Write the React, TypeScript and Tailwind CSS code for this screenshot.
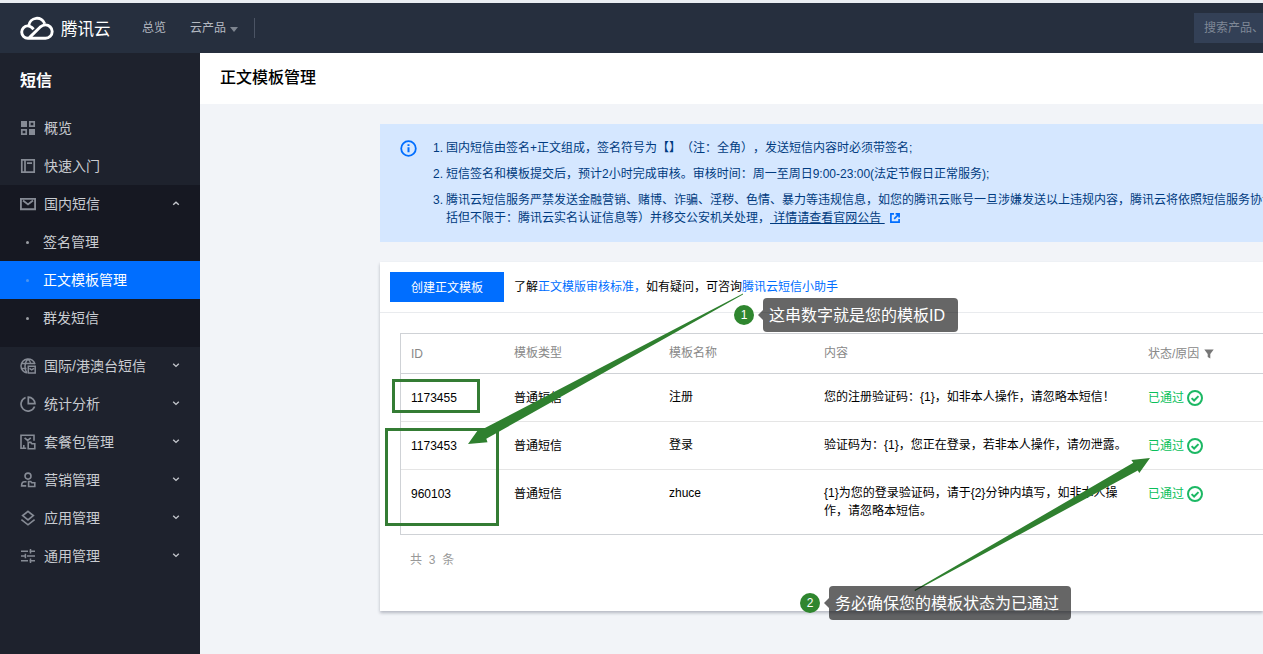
import React from 'react';

interface IconProps {
  name: string;
}

interface MenuItem {
  label: string;
  icon: string;
  arrow?: boolean;
}

interface Template {
  id: string;
  type: string;
  name: string;
  content: string[];
}

const topMenu: MenuItem[] = [
  { label: '概览', icon: 'overview' },
  { label: '快速入门', icon: 'guide' },
];

const subMenu = ['签名管理', '正文模板管理', '群发短信'];

const bottomMenu: MenuItem[] = [
  { label: '国际/港澳台短信', icon: 'global', arrow: true },
  { label: '统计分析', icon: 'stats', arrow: true },
  { label: '套餐包管理', icon: 'package', arrow: true },
  { label: '营销管理', icon: 'marketing', arrow: true },
  { label: '应用管理', icon: 'apps', arrow: true },
  { label: '通用管理', icon: 'settings', arrow: true },
];

const templates: Template[] = [
  { id: '1173455', type: '普通短信', name: '注册', content: ['您的注册验证码：{1}，如非本人操作，请忽略本短信！'] },
  { id: '1173453', type: '普通短信', name: '登录', content: ['验证码为：{1}，您正在登录，若非本人操作，请勿泄露。'] },
  { id: '960103', type: '普通短信', name: 'zhuce', content: ['{1}为您的登录验证码，请于{2}分钟内填写，如非本人操', '作，请忽略本短信。'] },
];

const MenuIcon: React.FC<IconProps> = ({ name }) => (
  <svg className="w-4 h-4 shrink-0 text-[#868b95]" viewBox="0 0 16 16" fill="none" stroke="currentColor" strokeWidth={1.7}>
    {name === 'overview' && (
      <>
        <path d="M1 1h6v6H1zM9 9h6v6H9z" fill="currentColor" stroke="none" />
        <path d="M9.8 1.8h4.4v4.4H9.8zM1.8 9.8h4.4v4.4H1.8z" />
      </>
    )}
    {name === 'guide' && (
      <path d="M1.8 1.8h12.4v12.4H1.8zM5 2v12M7 5.2h5" />
    )}
    {name === 'mail' && (
      <path d="M.9 2.9h14.2v10.4H.9zM3 4.6l5 3.8 5-3.8" strokeWidth={1.9} />
    )}
    {name === 'global' && (
      <>
        <path d="M15 6.3A7.1 7.1 0 1 0 7 15M1 5.5h13.5M1 10.4h5.5M8 1C4.2 4.5 4.2 11 7 15M8 1c1.7 1.5 2.6 3.2 2.7 5.2" strokeWidth={1.5} />
        <path d="M8.3 8.3h6.9v6.6H8.3zM9.5 10.3l2.2 1.6 2.3-1.6" strokeWidth={1.5} />
      </>
    )}
    {name === 'stats' && (
      <path d="M5.6 1.5a7 7 0 1 0 9 9M8.3 1.1v6.6H15A6.8 6.8 0 0 0 8.3 1.1z" />
    )}
    {name === 'package' && (
      <path d="M6.2 14.2H1V1.2h13v5.5M4.6 3.8l3 2.6 3.2-2.6M3.8 14V11M8.2 8.4h2.6l1 1.3h3v5H8.2z" strokeWidth={1.6} />
    )}
    {name === 'marketing' && (
      <path d="M8 1.1a3 3 0 1 1 0 6 3 3 0 0 1 0-6zM6.5 9.7H4.4c-2 0-2.8 1.3-2.8 4.2h4.6M8.6 9.5h2.2l1 1.3h3v3.7H8.6z" strokeWidth={1.6} />
    )}
    {name === 'apps' && (
      <path d="M8 1.4l5.3 4.2L8 9.8 2.7 5.6zM1.4 9.7L8 14.8l6.6-5.1" />
    )}
    {name === 'settings' && (
      <path d="M1 3.2h7M9.5 3.2H15M10.5 1v4.4M1 8h4M7 8h8M5.4 5.8v4.4M1 12.8h7M9.5 12.8H15M10.5 10.6V15" strokeWidth={1.5} />
    )}
  </svg>
);

const Chevron: React.FC<{ up?: boolean }> = ({ up }) => (
  <svg className="w-2 h-2 ml-auto mr-5 mb-0.5 text-[#c3c6cc]" viewBox="0 0 8 8" fill="none" stroke="currentColor" strokeWidth={1.4}>
    <path d={up ? 'M1.2 5.8L4 3.2l2.8 2.6' : 'M1.2 2.8L4 5.4l2.8-2.6'} />
  </svg>
);

const MenuRow: React.FC<{ item: MenuItem; up?: boolean }> = ({ item, up }) => (
  <div className="h-[38px] pl-5 flex items-center text-sm text-[#c9ccd1]">
    <MenuIcon name={item.icon} />
    <span className="ml-2 whitespace-nowrap">{item.label}</span>
    {item.arrow && <Chevron up={up} />}
  </div>
);

const Header: React.FC = () => (
  <header className="h-[50px] shrink-0 bg-[#262f3e] flex items-center pl-5 text-xs text-[#b4b9c1]">
    <svg className="w-[34px] h-6" viewBox="0 0 34 24" fill="none" stroke="#fff" strokeWidth={2.9}>
      <path d="M8.8 9.6A8.2 8.2 0 0 1 24.7 7.8" />
      <path d="M13.6 13.2C11.6 11 9.8 9.9 7.9 9.9a6.2 6.2 0 0 0 0 12.4h17.6a6.7 6.7 0 0 0 0-13.4c-2.2 0-3.8.8-5.5 2.3L9.4 21.6" />
    </svg>
    <span className="ml-[7px] pt-0.5 w-[50px] text-[16.5px] text-white whitespace-nowrap">腾讯云</span>
    <span className="ml-[31px]">总览</span>
    <span className="ml-6">云产品</span>
    <span className="ml-1 mt-0.5 border-x-4 border-t-[5px] border-x-transparent border-t-[#7d848f]" />
    <span className="ml-4 w-px h-5 bg-[#4b5464]" />
    <div className="ml-auto w-[69px] h-[30px] pl-2.5 bg-[#334056] flex items-center text-[#7f8896] whitespace-nowrap overflow-hidden">搜索产品、</div>
  </header>
);

const Sidebar: React.FC = () => (
  <aside className="w-[200px] shrink-0 bg-[#1e222d]">
    <h2 className="h-14 pl-5 flex items-center text-base font-bold text-white">短信</h2>
    {topMenu.map((item) => <MenuRow key={item.label} item={item} />)}
    <div className="bg-[#161822] pb-2.5">
      <MenuRow item={{ label: '国内短信', icon: 'mail', arrow: true }} up />
      {subMenu.map((label, i) => (
        <div
          key={label}
          className={i === 1
            ? 'h-[38px] pl-[26px] flex items-center text-sm bg-[#006eff] text-white'
            : 'h-[38px] pl-[26px] flex items-center text-sm text-[#c9ccd1]'}
        >
          <span className={i === 1 ? 'w-[3px] h-[3px] rounded-full bg-[#4c94ef]' : 'w-[3px] h-[3px] rounded-full bg-[#9a9da3]'} />
          <span className="ml-3.5">{label}</span>
        </div>
      ))}
    </div>
    {bottomMenu.map((item) => <MenuRow key={item.label} item={item} />)}
  </aside>
);

const Notice: React.FC = () => (
  <div className="h-[118px] pl-5 pt-[15px] flex bg-[#d5e7ff] text-xs leading-[18px] text-[#003b80] whitespace-nowrap">
    <svg className="w-[17px] h-[17px] mt-px shrink-0" viewBox="0 0 17 17" fill="none" stroke="#006eff" strokeWidth={1.8}>
      <circle cx="8.5" cy="8.5" r="7.3" />
      <path d="M8.5 7.3v5M8.5 4.2v1.9" strokeWidth={2} />
    </svg>
    <div className="ml-4 flex flex-col gap-2">
      <div className="flex"><span className="w-[13px]">1.</span><p>国内短信由签名+正文组成，签名符号为【】（注：全角），发送短信内容时必须带签名;</p></div>
      <div className="flex"><span className="w-[13px]">2.</span><p>短信签名和模板提交后，预计2小时完成审核。审核时间：周一至周日9:00-23:00(法定节假日正常服务);</p></div>
      <div className="flex">
        <span className="w-[13px]">3.</span>
        <div>
          <p>腾讯云短信服务严禁发送金融营销、赌博、诈骗、淫秽、色情、暴力等违规信息，如您的腾讯云账号一旦涉嫌发送以上违规内容，腾讯云将依照短信服务协议</p>
          <p className="flex items-center">
            括但不限于：腾讯云实名认证信息等）并移交公安机关处理，
            <a className="underline whitespace-pre"> 详情请查看官网公告 </a>
            <svg className="w-2.5 h-2.5 ml-[5px]" viewBox="0 0 10 10" fill="none" stroke="#006eff" strokeWidth={1.7}>
              <path d="M4 .9H.9v8.2h8.2V6M5.6.9h3.5v3.5M9 1L4.2 5.8" />
            </svg>
          </p>
        </div>
      </div>
    </div>
  </div>
);

const TemplateTable: React.FC = () => (
  <div className="ml-5 mt-5 h-[202px] border-y border-l border-[#cfd2d6] text-xs leading-[18px] whitespace-nowrap">
    <div className="h-10 flex items-center border-b border-[#cfd2d6] text-[#888]">
      <span className="w-[103px] ml-2.5">ID</span>
      <span className="w-[155px] pb-0.5">模板类型</span>
      <span className="w-[155px] pb-0.5">模板名称</span>
      <span className="w-[324px] pb-0.5">内容</span>
      <span className="flex items-center">
        状态/原因
        <svg className="w-2.5 h-2.5 ml-[5px]" viewBox="0 0 10 10" fill="#777">
          <path d="M.3.5h9.4L6.3 5v4.5L3.7 8V5z" />
        </svg>
      </span>
    </div>
    {templates.map((t, i) => (
      <div
        key={t.id}
        className={i < 2 ? 'h-12 pt-[14px] flex border-b border-[#e5e5e5] text-black' : 'pt-[14px] flex text-black'}
      >
        <span className="w-[103px] ml-2.5 mt-px">{t.id}</span>
        <span className="w-[155px] mt-px">{t.type}</span>
        <span className="w-[155px]">{t.name}</span>
        <div className="w-[324px]">{t.content.map((line) => <p key={line}>{line}</p>)}</div>
        <span className="h-[18px] mt-px flex items-center text-[#0abf5b]">
          已通过
          <svg className="w-4 h-4 ml-[3px]" viewBox="0 0 16 16" fill="none" stroke="#1cb864" strokeWidth={2}>
            <circle cx="8" cy="8" r="7" />
            <path d="M4.6 8.1l2.5 2.4 4.4-4.4" />
          </svg>
        </span>
      </div>
    ))}
  </div>
);

// Numbered hint with a dark bubble, pinned over the page
const Callout: React.FC<{ num: number; text: string; className: string }> = ({ num, text, className }) => (
  <div className={`absolute h-[34px] flex items-center text-white whitespace-nowrap ${className}`}>
    <span className="w-5 h-5 rounded-full bg-[#2f862f] flex items-center justify-center text-xs">{num}</span>
    <span className="ml-1 border-y-[5px] border-r-[5px] border-y-transparent border-r-black/60" />
    <span className="flex-1 h-full pl-1.5 pt-0.5 rounded bg-black/60 flex items-center text-base">{text}</span>
  </div>
);

const App: React.FC = () => {
  return (
    <div className="relative w-[1263px] h-[654px] overflow-hidden flex flex-col bg-[#f2f4f8] font-['Liberation_Sans','Noto_Sans_CJK_SC',sans-serif] [text-spacing-trim:space-all]">
      <div className="h-[3px] shrink-0 bg-[#e9edf2]" />
      <Header />
      <div className="flex-1 flex min-h-0">
        <Sidebar />
        <main className="flex-1 min-w-0">
          <h1 className="h-[51px] pl-5 pb-0.5 flex items-center bg-white text-base font-medium text-black">正文模板管理</h1>
          <div className="ml-[180px] mt-5">
            <Notice />
            <div className="mt-5 h-[349px] bg-white shadow-[0_2px_3px_rgba(54,58,80,0.32)]">
              <div className="h-[51px] pl-2.5 flex items-center border-b border-[#e9ebee] text-xs whitespace-nowrap text-black">
                <button className="w-[114px] h-[30px] pt-0.5 bg-[#006eff] text-white">创建正文模板</button>
                <p className="ml-2.5">
                  了解<a className="text-[#006eff]">正文模版审核标准，</a>如有疑问，可咨询<a className="text-[#006eff]">腾讯云短信小助手</a>
                </p>
              </div>
              <TemplateTable />
              <p className="ml-[30px] mt-4 text-xs leading-[18px] text-[#999] [word-spacing:3.5px]">共 3 条</p>
            </div>
          </div>
        </main>
      </div>

      <div className="absolute left-[392px] top-[379px] w-[88px] h-[34px] border-[3px] border-[#347c34]" />
      <div className="absolute left-[385px] top-[428px] w-[114px] h-[98px] border-[3px] border-[#347c34]" />
      <svg className="absolute inset-0 w-full h-full" viewBox="0 0 1263 654" fill="#2f802f">
        <path d="M743 293.5L481.5 429.8L478.5 429.3L468 444L487.5 442.3L486.3 438.8L743 294.5z" />
        <path d="M914.5 590L1133.3 462.8L1131.3 460L1150 458L1139.3 473L1137.8 470.6L915 591z" />
      </svg>
      <Callout num={1} text="这串数字就是您的模板ID" className="left-[734px] top-[298px] w-[224px]" />
      <Callout num={2} text="务必确保您的模板状态为已通过" className="left-[800px] top-[586px] w-[271px]" />
    </div>
  );
};

export default App;
